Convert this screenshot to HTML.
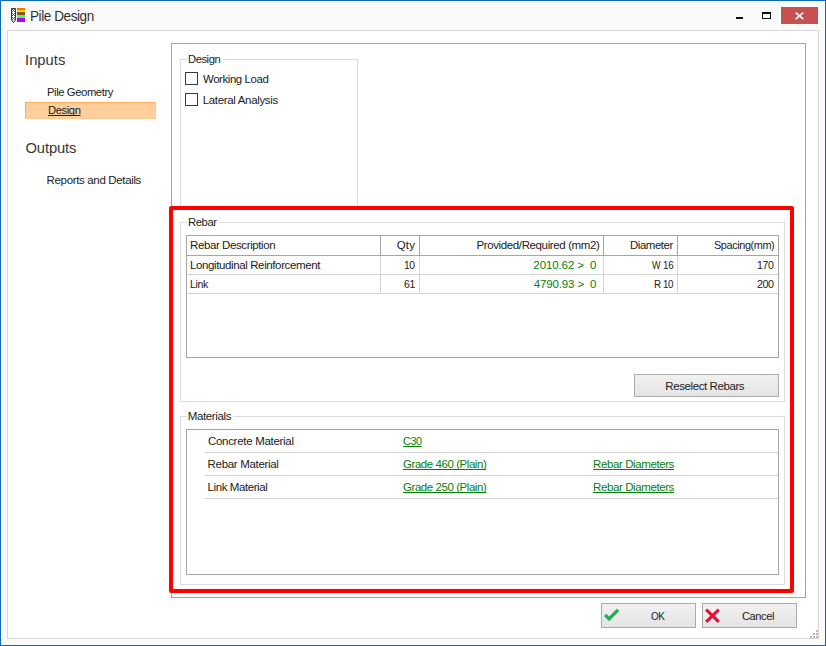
<!DOCTYPE html>
<html>
<head>
<meta charset="utf-8">
<title>Pile Design</title>
<style>
html,body{margin:0;padding:0;}
body{width:826px;height:646px;overflow:hidden;background:#fafafa;font-family:"Liberation Sans",sans-serif;}
#w{position:relative;width:826px;height:646px;overflow:hidden;background:#fafafa;}
#w div,#w span,#w svg{position:absolute;box-sizing:border-box;}
.t{white-space:pre;line-height:16px;height:16px;}
.frame{left:0;top:0;width:826px;height:646px;border:1px solid #0b68c4;}
.frame2{left:1px;top:1px;width:824px;height:644px;border:1px solid #ffffff;}
.client{left:7px;top:30px;width:812px;height:609px;border:1px solid #d6d6d6;background:#fff;}
.panel{left:171px;top:43px;width:635px;height:555px;border:1px solid #a3a3a3;background:#fff;}
.grp{border:1px solid #dcdcdc;}
.lbl{background:#fff;}
.box{border:1px solid #a6a6a6;background:#fff;}
.hl{left:25px;top:102px;width:131px;height:17px;background:#ffce9b;border:1px solid #ffc993;border-top-color:#ffad5c;border-left-color:#ffad5c;border-right-color:#ffc68f;}
.cb{width:13px;height:13px;border:1px solid #3a3a3a;background:#fff;}
.btn{border:1px solid #acacac;background:linear-gradient(#f1f1f1,#e4e4e4);}
.vl{width:1px;}
.hln{height:1px;}
.red{left:169px;top:206px;width:625px;height:387px;border:4px solid #ff0000;border-radius:2px;}
.dot{width:2px;height:2px;background:#b9b9b9;}
</style>
</head>
<body>
<div id="w">
<div class="frame"></div>
<div class="frame2"></div>

<!-- title icon -->
<svg style="left:10px;top:7px" width="17" height="17" viewBox="0 0 17 17">
  <rect x="7" y="1" width="8" height="2" fill="#ff6a00"/>
  <rect x="7" y="3" width="8" height="2" fill="#ffd800"/>
  <rect x="7" y="5" width="8" height="3" fill="#7f5a1a"/>
  <rect x="7" y="8" width="8" height="3" fill="#4cff4c"/>
  <rect x="7" y="11" width="8" height="4" fill="#b200ff"/>
  <path d="M1.5 1.5 H5.5 V12.8 L3.5 15.6 L1.5 12.8 Z" fill="#f4ffff" stroke="#33363c" stroke-width="1"/>
  <g fill="#ff1010"><rect x="2" y="2" width="1" height="1"/><rect x="4" y="2" width="1" height="1"/><rect x="3" y="3" width="1" height="1"/><rect x="2" y="4" width="1" height="1"/><rect x="4" y="4" width="1" height="1"/><rect x="2" y="6" width="1" height="1"/><rect x="4" y="6" width="1" height="1"/><rect x="3" y="7" width="1" height="1"/><rect x="2" y="8" width="1" height="1"/><rect x="4" y="8" width="1" height="1"/><rect x="2" y="10" width="1" height="1"/><rect x="4" y="10" width="1" height="1"/><rect x="3" y="11" width="1" height="1"/><rect x="2" y="12" width="1" height="1"/><rect x="4" y="12" width="1" height="1"/></g>
</svg>

<!-- caption buttons -->
<div style="left:736px;top:17px;width:7px;height:2px;background:#111"></div>
<div style="left:762px;top:12px;width:9px;height:7px;border:1px solid #111;border-top-width:2px;"></div>
<div style="left:781px;top:7px;width:37px;height:17px;background:#c75050"></div>
<svg style="left:781px;top:7px" width="37" height="17" viewBox="0 0 37 17">
  <path d="M14.7 5.6 L22.3 12.1 M22.3 5.6 L14.7 12.1" stroke="#fff" stroke-width="1.6" fill="none"/>
</svg>

<div class="client"></div>

<!-- left nav highlight -->
<div class="hl"></div>

<!-- main panel -->
<div class="panel"></div>

<!-- Design group -->
<div class="grp" style="left:180px;top:59px;width:178px;height:150px;"></div>
<div class="lbl" style="left:187px;top:52px;width:36px;height:14px;"></div>
<div class="cb" style="left:185px;top:72px;"></div>
<div class="cb" style="left:185px;top:93px;"></div>

<!-- Rebar group -->
<div class="grp" style="left:180px;top:222px;width:605px;height:180px;"></div>
<div class="lbl" style="left:187px;top:215px;width:33px;height:14px;"></div>
<div class="box" style="left:186px;top:235px;width:593px;height:123px;"></div>
<!-- header lines -->
<div class="hln" style="left:187px;top:255px;width:591px;background:#a6a6a6;"></div>
<div class="vl" style="left:380px;top:236px;height:19px;background:#a6a6a6;"></div>
<div class="vl" style="left:419px;top:236px;height:19px;background:#a6a6a6;"></div>
<div class="vl" style="left:603px;top:236px;height:19px;background:#a6a6a6;"></div>
<div class="vl" style="left:677px;top:236px;height:19px;background:#a6a6a6;"></div>
<!-- data lines -->
<div class="hln" style="left:187px;top:274px;width:591px;background:#d4d4d4;"></div>
<div class="hln" style="left:187px;top:293px;width:591px;background:#d4d4d4;"></div>
<div class="vl" style="left:380px;top:256px;height:38px;background:#d4d4d4;"></div>
<div class="vl" style="left:419px;top:256px;height:38px;background:#d4d4d4;"></div>
<div class="vl" style="left:603px;top:256px;height:38px;background:#d4d4d4;"></div>
<div class="vl" style="left:677px;top:256px;height:38px;background:#d4d4d4;"></div>
<!-- reselect button -->
<div class="btn" style="left:634px;top:374px;width:145px;height:23px;"></div>

<!-- Materials group -->
<div class="grp" style="left:180px;top:416px;width:605px;height:169px;"></div>
<div class="lbl" style="left:187px;top:409px;width:46px;height:14px;"></div>
<div class="box" style="left:186px;top:429px;width:593px;height:146px;"></div>
<div class="hln" style="left:205px;top:452px;width:573px;background:#d4d4d4;"></div>
<div class="hln" style="left:205px;top:475px;width:573px;background:#d4d4d4;"></div>
<div class="hln" style="left:205px;top:498px;width:573px;background:#d4d4d4;"></div>

<!-- red annotation -->
<div class="red"></div>

<!-- bottom buttons -->
<div class="btn" style="left:601px;top:603px;width:95px;height:25px;"></div>
<div class="btn" style="left:702px;top:603px;width:95px;height:25px;"></div>
<svg style="left:603px;top:607px" width="18" height="16" viewBox="0 0 18 16">
  <path d="M2.1 7.9 L6.1 11.9 L15.1 2.9" stroke="#1eb04b" stroke-width="3.2" fill="none" stroke-linecap="butt" stroke-linejoin="miter"/>
</svg>
<svg style="left:704px;top:606.6px" width="18" height="18" viewBox="0 0 18 18">
  <path d="M2.2 2.6 L14.8 14.8 M14.8 2.6 L2.2 14.8" stroke="#e8113a" stroke-width="3.2" fill="none"/>
</svg>

<!-- resize grip -->
<div class="dot" style="left:816px;top:630px;"></div>
<div class="dot" style="left:813px;top:633px;"></div>
<div class="dot" style="left:816px;top:633px;"></div>
<div class="dot" style="left:810px;top:636px;"></div>
<div class="dot" style="left:813px;top:636px;"></div>
<div class="dot" style="left:816px;top:636px;"></div>

<!-- text -->
<span class="t" style="left:29.95px;top:7.78px;font-size:13.9px;letter-spacing:-0.420px;color:#303030;transform:scaleX(0.9713);transform-origin:0 0;">Pile Design</span>
<span class="t" style="left:25.04px;top:51.67px;font-size:14.8px;letter-spacing:0.000px;color:#383838;">Inputs</span>
<span class="t" style="left:46.62px;top:84.02px;font-size:11.5px;letter-spacing:-0.420px;color:#212121;transform:scaleX(0.9788);transform-origin:0 0;">Pile Geometry</span>
<span class="t" style="left:47.62px;top:101.82px;font-size:11.5px;letter-spacing:-0.420px;color:#212121;transform:scaleX(0.9766);transform-origin:0 0;text-decoration:underline;text-underline-offset:1px;text-decoration-thickness:1px;text-decoration-skip-ink:none;">Design</span>
<span class="t" style="left:25.51px;top:139.77px;font-size:14.8px;letter-spacing:-0.145px;color:#383838;">Outputs</span>
<span class="t" style="left:46.60px;top:172.02px;font-size:11.5px;letter-spacing:-0.347px;color:#212121;">Reports and Details</span>
<span class="t" style="left:187.53px;top:50.82px;font-size:11.5px;letter-spacing:-0.420px;color:#212121;transform:scaleX(0.9704);transform-origin:0 0;">Design</span>
<span class="t" style="left:203.40px;top:70.72px;font-size:11.5px;letter-spacing:-0.420px;color:#212121;transform:scaleX(0.9942);transform-origin:0 0;">Working Load</span>
<span class="t" style="left:202.70px;top:92.12px;font-size:11.5px;letter-spacing:-0.335px;color:#212121;">Lateral Analysis</span>
<span class="t" style="left:187.72px;top:213.62px;font-size:11.5px;letter-spacing:-0.420px;color:#212121;transform:scaleX(0.9795);transform-origin:0 0;">Rebar</span>
<span class="t" style="left:190.00px;top:236.52px;font-size:11.5px;letter-spacing:-0.400px;color:#212121;">Rebar Description</span>
<span class="t" style="left:190.00px;top:257.02px;font-size:11.5px;letter-spacing:-0.386px;color:#212121;">Longitudinal Reinforcement</span>
<span class="t" style="left:190.07px;top:275.62px;font-size:11.5px;letter-spacing:-0.420px;color:#212121;transform:scaleX(0.9206);transform-origin:0 0;">Link</span>
<span class="t" style="left:396.66px;top:236.52px;font-size:11.5px;letter-spacing:0.174px;color:#212121;">Qty</span>
<span class="t" style="left:404.16px;top:257.02px;font-size:11.5px;letter-spacing:-0.420px;color:#212121;transform:scaleX(0.8886);transform-origin:0 0;">10</span>
<span class="t" style="left:404.01px;top:275.62px;font-size:11.5px;letter-spacing:-0.420px;color:#212121;transform:scaleX(0.9150);transform-origin:0 0;">61</span>
<span class="t" style="left:476.40px;top:236.52px;font-size:11.5px;letter-spacing:-0.371px;color:#212121;">Provided/Required (mm2)</span>
<span class="t" style="left:533.36px;top:257.02px;font-size:11.5px;letter-spacing:-0.104px;color:#078007;">2010.62 &gt; &nbsp;0</span>
<span class="t" style="left:533.72px;top:275.62px;font-size:11.5px;letter-spacing:-0.136px;color:#078007;">4790.93 &gt; &nbsp;0</span>
<span class="t" style="left:629.71px;top:236.52px;font-size:11.5px;letter-spacing:-0.420px;color:#212121;transform:scaleX(0.9893);transform-origin:0 0;">Diameter</span>
<span class="t" style="left:651.80px;top:257.02px;font-size:11.5px;letter-spacing:0.000px;color:#212121;transform:scaleX(0.7846);transform-origin:0 0;">W</span>
<span class="t" style="left:662.78px;top:257.02px;font-size:11.5px;letter-spacing:-0.420px;color:#212121;transform:scaleX(0.8582);transform-origin:0 0;">16</span>
<span class="t" style="left:653.83px;top:275.62px;font-size:11.5px;letter-spacing:0.000px;color:#212121;transform:scaleX(0.8562);transform-origin:0 0;">R</span>
<span class="t" style="left:662.79px;top:275.62px;font-size:11.5px;letter-spacing:-0.420px;color:#212121;transform:scaleX(0.8446);transform-origin:0 0;">10</span>
<span class="t" style="left:713.56px;top:236.52px;font-size:11.5px;letter-spacing:-0.420px;color:#212121;transform:scaleX(0.9459);transform-origin:0 0;">Spacing(mm)</span>
<span class="t" style="left:757.14px;top:257.02px;font-size:11.5px;letter-spacing:-0.420px;color:#212121;transform:scaleX(0.9168);transform-origin:0 0;">170</span>
<span class="t" style="left:756.90px;top:275.62px;font-size:11.5px;letter-spacing:-0.420px;color:#212121;transform:scaleX(0.9303);transform-origin:0 0;">200</span>
<span class="t" style="left:665.30px;top:377.72px;font-size:11.5px;letter-spacing:-0.411px;color:#212121;">Reselect Rebars</span>
<span class="t" style="left:187.70px;top:407.92px;font-size:11.5px;letter-spacing:-0.349px;color:#212121;">Materials</span>
<span class="t" style="left:207.96px;top:433.02px;font-size:11.5px;letter-spacing:-0.298px;color:#212121;">Concrete Material</span>
<span class="t" style="left:207.60px;top:455.92px;font-size:11.5px;letter-spacing:-0.320px;color:#212121;">Rebar Material</span>
<span class="t" style="left:207.60px;top:478.82px;font-size:11.5px;letter-spacing:-0.420px;color:#212121;">Link Material</span>
<span class="t" style="left:402.79px;top:433.02px;font-size:11.5px;letter-spacing:-0.420px;color:#078007;transform:scaleX(0.9418);transform-origin:0 0;text-decoration:underline;text-underline-offset:1px;text-decoration-thickness:1px;text-decoration-skip-ink:none;">C30</span>
<span class="t" style="left:402.76px;top:455.92px;font-size:11.5px;letter-spacing:-0.420px;color:#078007;transform:scaleX(0.9962);transform-origin:0 0;text-decoration:underline;text-underline-offset:1px;text-decoration-thickness:1px;text-decoration-skip-ink:none;">Grade 460 (Plain)</span>
<span class="t" style="left:402.76px;top:478.82px;font-size:11.5px;letter-spacing:-0.420px;color:#078007;transform:scaleX(0.9962);transform-origin:0 0;text-decoration:underline;text-underline-offset:1px;text-decoration-thickness:1px;text-decoration-skip-ink:none;">Grade 250 (Plain)</span>
<span class="t" style="left:593.10px;top:455.92px;font-size:11.5px;letter-spacing:-0.404px;color:#078007;text-decoration:underline;text-underline-offset:1px;text-decoration-thickness:1px;text-decoration-skip-ink:none;">Rebar Diameters</span>
<span class="t" style="left:593.10px;top:478.82px;font-size:11.5px;letter-spacing:-0.404px;color:#078007;text-decoration:underline;text-underline-offset:1px;text-decoration-thickness:1px;text-decoration-skip-ink:none;">Rebar Diameters</span>
<span class="t" style="left:650.93px;top:607.72px;font-size:11.5px;letter-spacing:-0.420px;color:#212121;transform:scaleX(0.8627);transform-origin:0 0;">OK</span>
<span class="t" style="left:742.28px;top:607.72px;font-size:11.5px;letter-spacing:-0.420px;color:#212121;transform:scaleX(0.9630);transform-origin:0 0;">Cancel</span>
</div>
</body>
</html>
